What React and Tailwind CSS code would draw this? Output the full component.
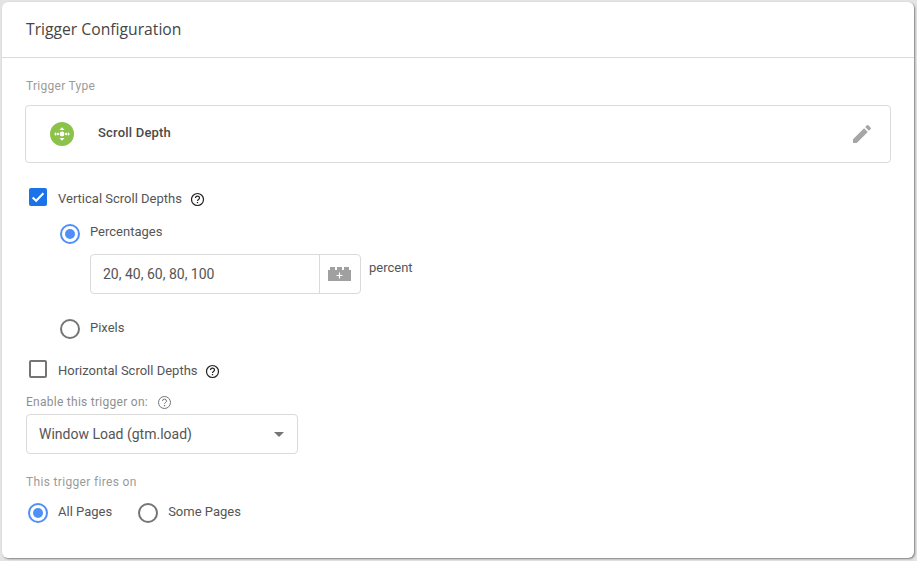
import React from 'react';

function Help({ className = '' }) {
  return (
    <svg viewBox="0 0 24 24" className={`w-[15px] h-[15px] ${className}`} fill="none">
      <circle cx="12" cy="12" r="9.6" stroke="#212121" strokeWidth="1.9" />
      <path d="M8.8 9.7a3.2 3.2 0 0 1 6.4 0c0 2.3-3.2 2.4-3.2 4.6" stroke="#212121" strokeWidth="1.9" />
      <rect x="11" y="16" width="2" height="2" fill="#212121" />
    </svg>
  );
}

function Radio({ checked }) {
  return (
    <span className={`flex items-center justify-center w-5 h-5 rounded-full border-2 ${checked ? 'border-[#4f8ff7]' : 'border-[#757575]'}`}>
      {checked && <span className="w-[10px] h-[10px] rounded-full bg-[#4f8ff7]"></span>}
    </span>
  );
}

export default function App() {
  return (
    <div className="w-[917px] h-[561px] bg-[#e4e4e4] pt-[2px] pl-[2px] pr-[3px] pb-[3px] font-['Roboto',sans-serif] text-[13px] text-[#555555]">
      <div className="h-full bg-white rounded-[6px] shadow-[1px_1px_2px_rgba(0,0,0,0.45)]">
        <div className="h-[56px] border-b border-[#dadada] pl-6 pt-[17px] font-['Open_Sans',sans-serif] text-[15.7px] leading-5 text-[#454545]">
          Trigger Configuration
        </div>

        <div className="px-[23px]">
          <div className="pl-px pt-[21px] text-[12px] tracking-[0.27px] leading-[14px] text-[#9b9b9b]">Trigger Type</div>

          <div className="mt-3 h-[58px] border border-[#dadada] rounded flex items-center pl-6 pr-4">
            <span className="flex items-center justify-center w-6 h-6 rounded-full bg-[#8bc34a]">
              <svg viewBox="0 0 24 24" className="w-[18px] h-[18px]" fill="white">
                <circle cx="12" cy="12" r="3.2" />
                <circle cx="6.4" cy="12" r="1.7" />
                <circle cx="17.6" cy="12" r="1.7" />
                <path d="M12 3l3.4 3.8H8.6zM12 21l3.4-3.8H8.6zM1.5 12l2.6-2.6v5.2zM22.5 12l-2.6-2.6v5.2z" />
              </svg>
            </span>
            <span className="ml-6 -mt-[2px] font-medium tracking-[0.2px] text-[#4a4a4a]">Scroll Depth</span>
            <svg viewBox="0 0 24 24" className="ml-auto w-6 h-6" fill="#a6a6a6">
              <path d="M3 17.25V21h3.75L17.81 9.94l-3.75-3.75L3 17.25zM20.71 7.04a1 1 0 0 0 0-1.41l-2.34-2.34a1 1 0 0 0-1.41 0l-1.83 1.83 3.75 3.75 1.83-1.83z" />
            </svg>
          </div>

          <div className="mt-[25px] flex items-center pl-[4px] h-[18px]">
            <span className="flex items-center justify-center w-[18px] h-[18px] rounded-[2px] bg-[#1a73e8]">
              <svg viewBox="0 0 18 18" className="w-[18px] h-[18px]" fill="none">
                <path d="M3.6 9.4l3.6 3.4 7.2-7.6" stroke="white" strokeWidth="2" />
              </svg>
            </span>
            <span className="ml-[11px] mt-[4px]">Vertical Scroll Depths</span>
            <Help className="ml-2 mt-[4px]" />
          </div>

          <div className="mt-[18px] flex items-center pl-[35px] h-5">
            <Radio checked />
            <span className="ml-[10px] -mt-[4px]">Percentages</span>
          </div>

          <div className="mt-[10px] pl-[65px] flex items-start">
            <div className="w-[271px] h-10 border border-[#dadada] rounded flex items-center">
              <span className="flex-1 pl-3 text-[14px] text-[#555555]">20, 40, 60, 80, 100</span>
              <span className="w-[41px] h-full border-l border-[#dadada] flex items-center justify-center pr-[2px]">
                <svg viewBox="0 0 23 14" className="w-[23px] h-[14px]">
                  <path d="M0 3h2V0h5v3h2V0h5v3h2V0h5v3h2v11H0z" fill="#a0a0a0" />
                  <path d="M8.5 8.5h6M11.5 5.5v6" stroke="white" strokeWidth="1.2" />
                </svg>
              </span>
            </div>
            <span className="ml-2 mt-[6px] leading-[16px]">percent</span>
          </div>

          <div className="mt-[25px] flex items-center pl-[35px] h-5">
            <Radio />
            <span className="ml-[10px] -mt-[2px]">Pixels</span>
          </div>

          <div className="mt-[21px] flex items-center pl-[4px] h-[18px]">
            <span className="w-[18px] h-[18px] rounded-[2px] border-2 border-[#757575]"></span>
            <span className="ml-[11px] mt-[4px]">Horizontal Scroll Depths</span>
            <Help className="ml-[7px] mt-[4px]" />
          </div>

          <div className="mt-[17px] pl-px flex items-center h-[14px] text-[12px] tracking-[0.27px] text-[#8f8f8f]">
            Enable this trigger on:
            <svg viewBox="0 0 24 24" className="ml-[9px] w-[15px] h-[15px]" fill="none">
              <circle cx="12" cy="12" r="9.6" stroke="#757575" strokeWidth="1.6" />
              <path d="M8.8 9.7a3.2 3.2 0 0 1 6.4 0c0 2.3-3.2 2.4-3.2 4.6" stroke="#757575" strokeWidth="1.6" />
              <rect x="11" y="16" width="2" height="2" fill="#757575" />
            </svg>
          </div>

          <div className="mt-[5px] ml-px w-[272px] h-10 border border-[#dadada] rounded flex items-center pl-3 pr-[13px] text-[14px] text-[#555555]">
            Window Load (gtm.load)
            <span className="ml-auto w-0 h-0 border-x-[5px] border-x-transparent border-t-[5px] border-t-[#757575]"></span>
          </div>

          <div className="mt-[21px] pl-px text-[12px] tracking-[0.33px] leading-[14px] text-[#9b9b9b]">This trigger fires on</div>

          <div className="mt-[14px] pl-[3px] flex items-center h-5">
            <Radio checked />
            <span className="ml-[10px] -mt-[2px]">All Pages</span>
            <span className="ml-[26px]"><Radio /></span>
            <span className="ml-[10px] -mt-[2px]">Some Pages</span>
          </div>
        </div>
      </div>
    </div>
  );
}
